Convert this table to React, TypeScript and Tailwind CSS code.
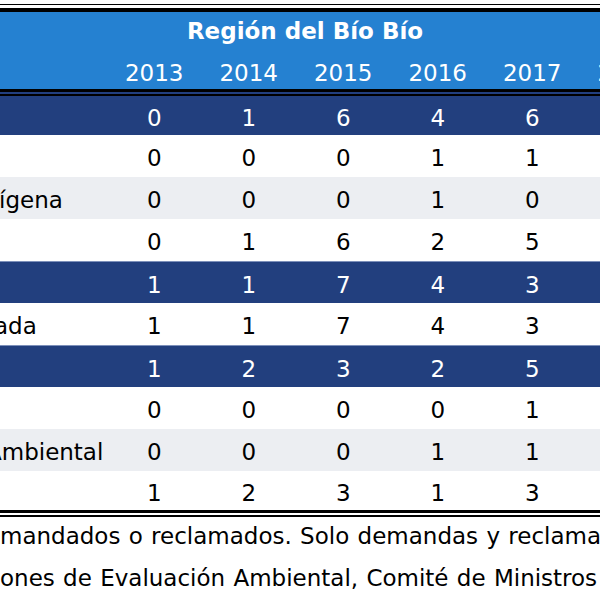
import React from 'react';

// Cropped view of the Bío Bío region table
const years = [2013, 2014, 2015, 2016, 2017, 2018];

type Row = {
  label: string;
  labelClass?: string;
  values: number[];
  kind: 'total' | 'white' | 'gray';
};

const rows: Row[] = [
  { label: '', values: [0, 1, 6, 4, 6, 3], kind: 'total' },
  { label: '', values: [0, 0, 0, 1, 1, 0], kind: 'white' },
  { label: 'ígena', labelClass: '-ml-[1px]', values: [0, 0, 0, 1, 0, 0], kind: 'gray' },
  { label: '', values: [0, 1, 6, 2, 5, 3], kind: 'white' },
  { label: '', values: [1, 1, 7, 4, 3, 2], kind: 'total' },
  { label: 'ada', labelClass: '-ml-[6px]', values: [1, 1, 7, 4, 3, 2], kind: 'white' },
  { label: '', values: [1, 2, 3, 2, 5, 1], kind: 'total' },
  { label: '', values: [0, 0, 0, 0, 1, 0], kind: 'white' },
  { label: 'Ambiental', labelClass: '-ml-[14px]', values: [0, 0, 0, 1, 1, 0], kind: 'gray' },
  { label: '', values: [1, 2, 3, 1, 3, 1], kind: 'white' },
];

const rowBg = {
  total: 'bg-[#223f7e] text-white',
  white: 'bg-white text-black',
  gray: 'bg-[#eceef2] text-black',
};

export default function App() {
  return (
    <div className="w-[600px] h-[600px] overflow-hidden bg-white font-['DejaVu_Sans',sans-serif] text-[23px]">
      {/* top double rule */}
      <div className="h-[4px]" />
      <div className="h-[1px] bg-black" />
      <div className="h-[3px]" />
      <div className="h-[4px] bg-black" />

      {/* header */}
      <div className="bg-[#2581d1] text-white">
        <div className="h-[38px] leading-[38px] pl-[10px] text-center font-bold whitespace-nowrap">
          Región del Bío Bío
        </div>
        <div className="h-[39px] pt-[10px] leading-[27px] grid grid-cols-[107px_repeat(6,94.5px)]">
          <div />
          {years.map((y) => (
            <div key={y} className="text-center">{y}</div>
          ))}
        </div>
      </div>
      <div className="h-[3px] bg-black" />
      <div className="h-[2px] bg-[#223f7e]" />
      <div className="h-[2px] bg-black" />

      {/* body */}
      {rows.map((row, i) => {
        const height = i === 0 || i === rows.length - 1 ? 'h-[39px]' : 'h-[42px]';
        const border = row.kind === 'total' && i > 0 ? 'border-t border-[#7d90ba]' : '';
        return (
          <div
            key={i}
            className={`${height} ${rowBg[row.kind]} ${border} pt-[5px] grid grid-cols-[107px_repeat(6,94.5px)] items-center leading-[27px]`}
          >
            <div className="overflow-hidden whitespace-nowrap">
              <div className={row.labelClass}>{row.label}</div>
            </div>
            {row.values.map((v, j) => (
              <div key={j} className="text-center">{v}</div>
            ))}
          </div>
        );
      })}

      {/* bottom double rule */}
      <div className="h-[3px] bg-black" />
      <div className="h-[2px]" />
      <div className="h-[2px] bg-black" />

      {/* notes */}
      <div className="flex flex-col gap-[4px] leading-[38px] whitespace-nowrap text-black [word-spacing:1px]">
        <div>mandados o reclamados. Solo demandas y reclamaciones ante los tribunales</div>
        <div>ones de Evaluación Ambiental, Comité de Ministros y Consejo de Ministros</div>
      </div>
    </div>
  );
}
